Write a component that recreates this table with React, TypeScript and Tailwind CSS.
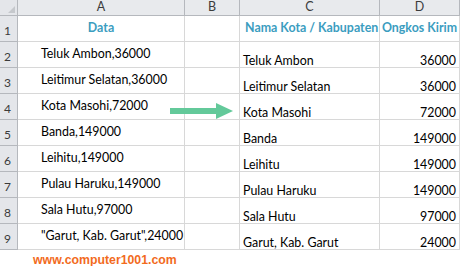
const rows = [
  { a: "Teluk Ambon,36000", c: "Teluk Ambon", d: "36000" },
  { a: "Leitimur Selatan,36000", c: "Leitimur Selatan", d: "36000" },
  { a: "Kota Masohi,72000", c: "Kota Masohi", d: "72000" },
  { a: "Banda,149000", c: "Banda", d: "149000" },
  { a: "Leihitu,149000", c: "Leihitu", d: "149000" },
  { a: "Pulau Haruku,149000", c: "Pulau Haruku", d: "149000" },
  { a: "Sala Hutu,97000", c: "Sala Hutu", d: "97000" },
  { a: "\"Garut, Kab. Garut\",24000", c: "Garut, Kab. Garut", d: "24000" },
];

const cols = ["A", "B", "C", "D"];
const widths = ["w-[167px]", "w-[55px]", "w-[140px]", "w-[80px]"];

const RowHead = ({ n }: { n: number }) => (
  <div className="w-[18px] h-full flex items-end pl-[4px] pb-[1px] bg-[#e4e6ea] border-r border-b border-[#b5b8bd] text-[12px] text-[#3b3b3b]">
    {n}
  </div>
);

export default function App() {
  return (
    <div className="relative w-[460px] h-[266px] bg-white overflow-hidden font-['Lato',sans-serif] text-[12.4px] text-black">
      {/* column headers */}
      <div className="flex h-[16px]">
        <div className="relative w-[18px] h-full bg-[#e4e6ea] border-r border-b border-[#b5b8bd]">
          <div className="absolute right-[2px] bottom-[2px] w-0 h-0 border-l-[7px] border-l-transparent border-b-[7px] border-b-[#c5c8cc]" />
        </div>
        {cols.map((c, i) => (
          <div
            key={c}
            className={`${widths[i]} h-full flex items-center justify-center bg-[#e8eaed] border-r border-b border-[#b5b8bd] text-[12.5px] leading-none text-[#3b3b3b]`}
          >
            {c}
          </div>
        ))}
      </div>

      {/* row 1 */}
      <div className="flex h-[26px]">
        <RowHead n={1} />
        <div className="w-[167px] h-full flex items-center justify-center border-r border-b border-[#d8d8d8] font-bold text-[#3b9dbf]">
          Data
        </div>
        <div className="w-[55px] h-full border-r border-b border-[#d8d8d8]" />
        <div className="w-[140px] h-full flex items-center pl-[5px] border-r border-b border-[#d8d8d8] font-bold text-[#3b9dbf] whitespace-nowrap">
          Nama Kota / Kabupaten
        </div>
        <div className="w-[80px] h-full flex items-center justify-center border-r border-b border-[#d8d8d8] font-bold text-[#3b9dbf] whitespace-nowrap">
          Ongkos Kirim
        </div>
      </div>

      {rows.map((r, i) => (
        <div key={i} className="flex h-[26px]">
          <RowHead n={i + 2} />
          <div className="w-[167px] h-full flex items-center pl-[23px] border-r border-b border-[#d8d8d8] whitespace-nowrap">
            {r.a}
          </div>
          <div className="w-[55px] h-full border-r border-b border-[#d8d8d8]" />
          <div className="w-[140px] h-full flex items-end pl-[3px] leading-[13px] border-r border-b border-[#d8d8d8] whitespace-nowrap">
            {r.c}
          </div>
          <div className="w-[80px] h-full flex items-end justify-end pr-[3px] leading-[13px] border-r border-b border-[#d8d8d8]">
            {r.d}
          </div>
        </div>
      ))}

      <div className="pl-[33px] pt-[1px] font-['Liberation_Sans',sans-serif] font-bold text-[12.3px] text-[#f26b1d]">
        www.computer1001.com
      </div>

      {/* arrow */}
      <svg className="absolute left-[170px] top-[103px]" width="64" height="16" viewBox="0 0 64 16">
        <rect x="0" y="5" width="47" height="6" fill="#63c99a" />
        <polygon points="46,0 63,8 46,16" fill="#63c99a" />
      </svg>
    </div>
  );
}
